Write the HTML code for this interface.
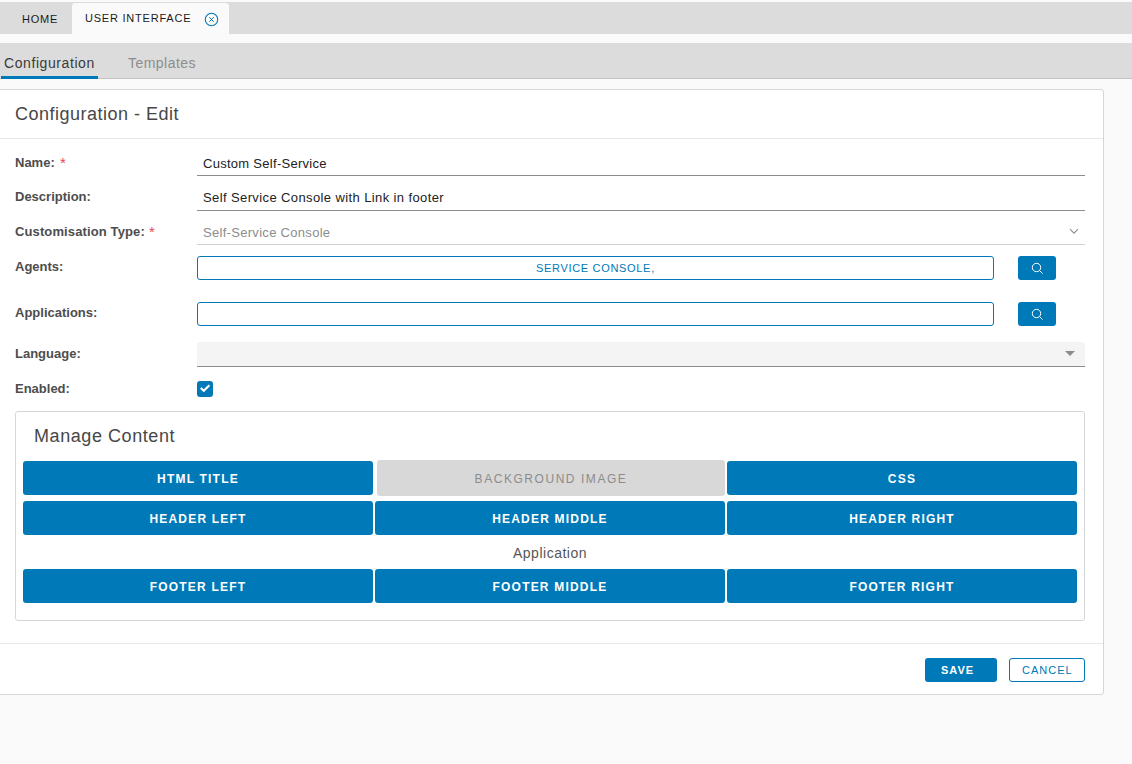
<!DOCTYPE html>
<html><head><meta charset="utf-8">
<style>
*{box-sizing:border-box;margin:0;padding:0}
html,body{width:1132px;height:764px;overflow:hidden;background:#fafafa;font-family:"Liberation Sans",sans-serif;position:relative}
.a{position:absolute;white-space:nowrap}
.tabbar{left:0;top:2px;width:1132px;height:32px;background:#dcdcdc}
.tab-active{left:72px;top:3px;width:157px;height:31px;background:#fafafa;border-radius:3px 3px 0 0}
.t11{font-size:11px;letter-spacing:1px;color:#1b1b1b}
.subbar{left:0;top:43px;width:1132px;height:36px;background:#dcdcdc;border-bottom:1px solid #c4c4c4}
.card{left:-3px;top:89px;width:1107px;height:606px;background:#fff;border:1px solid #d6d6d6;border-radius:3px}
.lbl{font-size:13px;font-weight:bold;color:#4d4d4d}
.req{color:#e8474f;font-weight:normal}
.val{font-size:13px;color:#222}
.uline{height:1px;background:#8c8c8c}
.inp{border:1px solid #0079b8;border-radius:3px;background:#fff}
.sbtn{background:#0079b8;border-radius:3px}
.btn{height:34px;width:350px;background:#0079b8;border-radius:3px;color:#fff;font-size:12px;font-weight:bold;letter-spacing:1.2px;text-align:center;line-height:36px}
</style></head>
<body>
<!-- top tab bar -->
<div class="a tabbar"></div>
<div class="a tab-active"></div>
<div class="a t11" style="left:22px;top:13px;letter-spacing:0.75px">HOME</div>
<div class="a t11" style="left:85px;top:12px;letter-spacing:0.78px">USER INTERFACE</div>
<svg class="a" style="left:204px;top:12px" width="15" height="15" viewBox="0 0 15 15">
  <circle cx="7.5" cy="7.5" r="6.2" fill="none" stroke="#0079b8" stroke-width="1.1"/>
  <path d="M5.3 5.3L9.7 9.7M9.7 5.3L5.3 9.7" stroke="#0079b8" stroke-width="1"/>
</svg>

<!-- sub nav -->
<div class="a subbar"></div>
<div class="a" style="left:1px;top:76px;width:97px;height:3px;background:#0079b8"></div>
<div class="a" style="left:4px;top:55px;font-size:14px;color:#3a3a3a;letter-spacing:0.58px">Configuration</div>
<div class="a" style="left:128px;top:55px;font-size:14px;color:#8c8c8c;letter-spacing:0.47px">Templates</div>

<!-- card -->
<div class="a card"></div>
<div class="a" style="left:15px;top:104px;font-size:18px;color:#474747;letter-spacing:0.5px">Configuration - Edit</div>
<div class="a" style="left:0;top:138px;width:1103px;height:1px;background:#e8e8e8"></div>

<div class="a lbl" style="left:15px;top:155px">Name:</div>
<div class="a req" style="left:60px;top:154px;font-size:15px">*</div>
<div class="a val" style="left:203px;top:156px;letter-spacing:0.28px">Custom Self-Service</div>
<div class="a uline" style="left:197px;top:175px;width:888px"></div>

<div class="a lbl" style="left:15px;top:189px">Description:</div>
<div class="a val" style="left:203px;top:190px;letter-spacing:0.39px">Self Service Console with Link in footer</div>
<div class="a uline" style="left:197px;top:210px;width:888px"></div>

<div class="a lbl" style="left:15px;top:224px;letter-spacing:0.12px">Customisation Type:</div>
<div class="a req" style="left:149px;top:223px;font-size:15px">*</div>
<div class="a val" style="left:203px;top:225px;color:#8c8c8c;letter-spacing:0.3px">Self-Service Console</div>
<div class="a uline" style="left:197px;top:244px;width:888px;background:#d0d0d0"></div>
<svg class="a" style="left:1069px;top:228px" width="10" height="7" viewBox="0 0 10 7"><path d="M1 1.2L5 5.2L9 1.2" fill="none" stroke="#8c8c8c" stroke-width="1.1"/></svg>

<div class="a lbl" style="left:15px;top:259px">Agents:</div>
<div class="a inp" style="left:197px;top:256px;width:797px;height:24px"></div>
<div class="a" style="left:536px;top:262px;font-size:11px;color:#0079b8;letter-spacing:0.68px">SERVICE CONSOLE,</div>
<div class="a sbtn" style="left:1018px;top:256px;width:38px;height:24px"></div>
<svg class="a" style="left:1030px;top:261px" width="14" height="14" viewBox="0 0 14 14"><circle cx="6.5" cy="6.5" r="4.2" fill="none" stroke="#fff" stroke-width="1"/><path d="M9.6 9.6L12.6 12.6" stroke="#fff" stroke-width="1"/></svg>

<div class="a lbl" style="left:15px;top:305px">Applications:</div>
<div class="a inp" style="left:197px;top:302px;width:797px;height:24px"></div>
<div class="a sbtn" style="left:1018px;top:302px;width:38px;height:24px"></div>
<svg class="a" style="left:1030px;top:307px" width="14" height="14" viewBox="0 0 14 14"><circle cx="6.5" cy="6.5" r="4.2" fill="none" stroke="#fff" stroke-width="1"/><path d="M9.6 9.6L12.6 12.6" stroke="#fff" stroke-width="1"/></svg>

<div class="a lbl" style="left:15px;top:346px">Language:</div>
<div class="a" style="left:197px;top:342px;width:888px;height:25px;background:#f4f4f4;border-radius:3px 3px 0 0;border-bottom:1px solid #8c8c8c"></div>
<svg class="a" style="left:1065px;top:351px" width="10" height="5" viewBox="0 0 10 5"><path d="M0 0H10L5 5Z" fill="#8c8c8c"/></svg>

<div class="a lbl" style="left:15px;top:381px">Enabled:</div>
<div class="a" style="left:197px;top:381px;width:16px;height:16px;background:#0079b8;border-radius:3px"></div>
<svg class="a" style="left:197px;top:381px" width="16" height="16" viewBox="0 0 16 16"><path d="M3.8 6.9L6.8 9.8L12.4 4.3" fill="none" stroke="#fff" stroke-width="2.1"/></svg>

<!-- manage content -->
<div class="a" style="left:15px;top:411px;width:1070px;height:210px;border:1px solid #d6d6d6;border-radius:3px;background:#fff"></div>
<div class="a" style="left:34px;top:426px;font-size:18px;color:#474747;letter-spacing:0.57px">Manage Content</div>

<div class="a btn" style="left:23px;top:461px">HTML TITLE</div>
<div class="a btn" style="left:377px;top:460px;width:348px;height:36px;line-height:38px;background:#d8d8d8;color:#8c8c8c;font-weight:normal;letter-spacing:1.55px">BACKGROUND IMAGE</div>
<div class="a btn" style="left:727px;top:461px">CSS</div>

<div class="a btn" style="left:23px;top:501px">HEADER LEFT</div>
<div class="a btn" style="left:375px;top:501px">HEADER MIDDLE</div>
<div class="a btn" style="left:727px;top:501px">HEADER RIGHT</div>

<div class="a" style="left:23px;top:545px;width:1054px;text-align:center;font-size:14px;color:#565656;letter-spacing:0.5px">Application</div>

<div class="a btn" style="left:23px;top:569px">FOOTER LEFT</div>
<div class="a btn" style="left:375px;top:569px">FOOTER MIDDLE</div>
<div class="a btn" style="left:727px;top:569px">FOOTER RIGHT</div>

<!-- footer -->
<div class="a" style="left:0;top:643px;width:1103px;height:1px;background:#e8e8e8"></div>
<div class="a" style="left:925px;top:658px;width:72px;height:24px;background:#0079b8;border-radius:3px"></div>
<div class="a" style="left:941px;top:664px;font-size:11px;font-weight:bold;color:#fff;letter-spacing:1px">SAVE</div>
<div class="a" style="left:1009px;top:658px;width:76px;height:24px;border:1px solid #0079b8;border-radius:3px;background:#fff"></div>
<div class="a" style="left:1022px;top:664px;font-size:11px;color:#0079b8;letter-spacing:1px">CANCEL</div>
</body></html>
